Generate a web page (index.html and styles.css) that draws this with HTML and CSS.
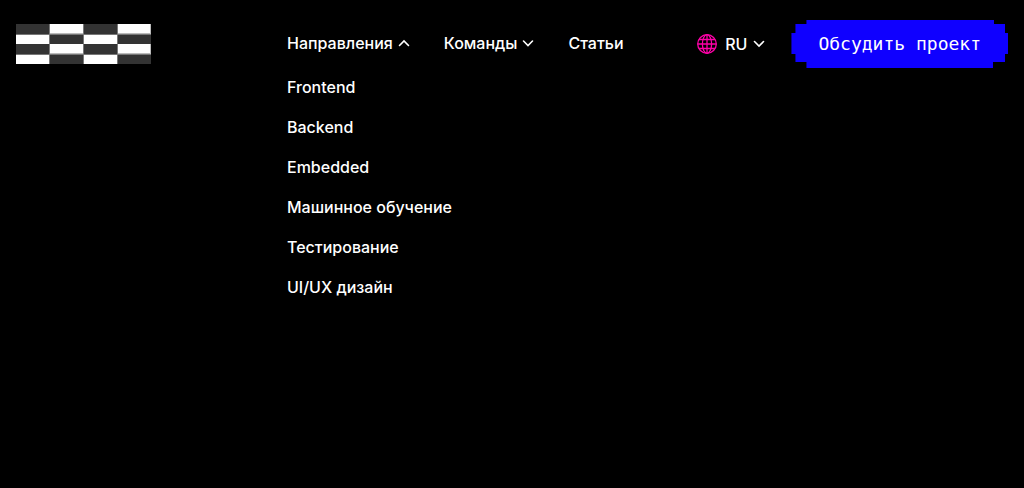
FILE: index.html
```html
<!DOCTYPE html>
<html lang="ru">
<head>
  <meta charset="utf-8">
  <meta name="viewport" content="width=device-width, initial-scale=1">
  <title>Направления</title>
  <link rel="stylesheet" href="styles.css">
</head>
<body>
  <header class="header">
    <a class="logo" href="#" aria-label="Главная">
      <svg class="logo-image" width="135" height="40" viewBox="0 0 135 40" shape-rendering="crispEdges" aria-hidden="true">
        <path fill="#333" d="M0 0h135v40H0z"/>
        <path fill="#fff" d="M34 0h33v9H34zM102 0h32v9h-32zM0 11h33v9H0zM68 11h33v9H68zM34 20h33v9H34zM102 20h32v9h-32zM0 31h33v9H0zM68 31h33v9H68z"/>
        <path fill="#777" d="M33 0h1v40h-1zM67 0h1v40h-1zM101 0h1v40h-1zM0 10h135v1H0zM0 30h135v1H0z"/>
        <path fill="#bbb" d="M34 9h33v1H34zM102 9h32v1h-32zM34 29h33v1H34zM102 29h32v1h-32zM134 0h1v10h-1zM134 20h1v10h-1z"/>
      </svg>
    </a>
    <nav class="nav" aria-label="Основная навигация">
      <div class="nav-item">
        <button class="nav-link" type="button" aria-expanded="true" aria-controls="directions">
          Направления
          <svg class="chevron chevron-up" viewBox="0 0 16 16" aria-hidden="true"><path d="M3.5 5.5L8 10l4.5-4.5"/></svg>
        </button>
        <ul class="menu" id="directions">
          <li><a class="menu-link" href="#">Frontend</a></li>
          <li><a class="menu-link" href="#">Backend</a></li>
          <li><a class="menu-link" href="#">Embedded</a></li>
          <li><a class="menu-link" href="#">Машинное обучение</a></li>
          <li><a class="menu-link" href="#">Тестирование</a></li>
          <li><a class="menu-link" href="#">UI/UX дизайн</a></li>
        </ul>
      </div>
      <button class="nav-link" type="button" aria-expanded="false">
        Команды
        <svg class="chevron" viewBox="0 0 16 16" aria-hidden="true"><path d="M3.5 6L8 10.5 12.5 6"/></svg>
      </button>
      <a class="nav-link" href="#">Статьи</a>
    </nav>
    <div class="actions">
      <button class="language" type="button" aria-expanded="false">
        <svg class="globe" viewBox="0 0 20 20" aria-hidden="true">
          <circle cx="10" cy="10" r="9.3"/>
          <ellipse cx="10" cy="10" rx="4.6" ry="9.3"/>
          <path d="M10 .7v18.6M.7 10h18.6M2.2 5.5h15.6M2.2 14.5h15.6"/>
        </svg>
        <span class="language-name">RU
          <svg class="chevron" viewBox="0 0 16 16" aria-hidden="true"><path d="M3.5 5.5L8 10l4.5-4.5"/></svg>
        </span>
      </button>
      <button class="discuss" type="button">Обсудить проект</button>
    </div>
  </header>
</body>
</html>
```
FILE: styles.css
```css
* {
  box-sizing: border-box;
}

body {
  min-height: 100vh;
  margin: 0;
  background: #000;
  color: #fff;
  font: 500 16px/24px Inter, sans-serif;
}

button {
  padding: 0;
  border: 0;
  background: none;
  color: inherit;
  font: inherit;
  cursor: pointer;
}

a {
  color: inherit;
  text-decoration: none;
}

.header {
  display: flex;
  align-items: center;
  padding: 20px 16px;
}

.logo-image {
  display: block;
}

.nav {
  display: flex;
  align-items: center;
  gap: 32px;
  margin-left: 136px;
  padding-bottom: 2px;
}

.nav-item {
  position: relative;
}

.nav-link {
  display: flex;
  align-items: center;
  gap: 3px;
}

.chevron {
  width: 16px;
  height: 16px;
  fill: none;
  stroke: currentColor;
  stroke-width: 1.6;
  stroke-linecap: round;
}

.chevron-up {
  transform: rotate(180deg);
}

.menu {
  position: absolute;
  top: 100%;
  left: 0;
  display: grid;
  gap: 16px;
  margin: 0;
  padding: 20px 0;
  list-style: none;
  white-space: nowrap;
}

.menu-link {
  display: block;
}

.actions {
  display: flex;
  align-items: center;
  gap: 24px;
  margin-left: auto;
}

.language {
  display: flex;
  align-items: center;
  gap: 8px;
}

.language-name {
  display: flex;
  align-items: center;
  gap: 4px;
}

.globe {
  width: 20px;
  height: 20px;
  fill: none;
  stroke: #ff00a8;
  stroke-width: 1.3;
}

.discuss {
  padding: 12px 27px;
  background: #0f00ff;
  font: 400 18px/24px "DejaVu Sans Mono", monospace;
  white-space: nowrap;
  clip-path: polygon(
    0 13px, 4px 13px, 4px 4px, 15px 4px, 15px 0,
    calc(100% - 14px) 0, calc(100% - 14px) 4px, calc(100% - 3px) 4px, calc(100% - 3px) 13px, 100% 13px,
    100% 34px, calc(100% - 3px) 34px, calc(100% - 3px) 42px, calc(100% - 15px) 42px, calc(100% - 15px) 100%,
    15px 100%, 15px 42px, 4px 42px, 4px 34px, 0 34px
  );
}
```
